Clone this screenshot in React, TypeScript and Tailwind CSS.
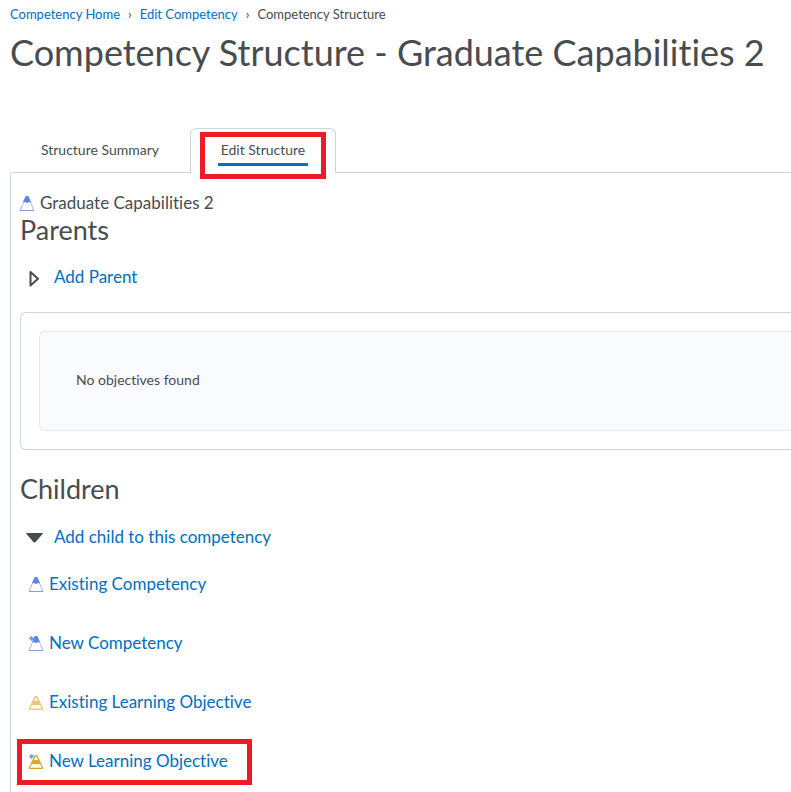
import React, { useState } from 'react';

type IconKind = 'competency' | 'objective';

const childLinks: { label: string; kind: IconKind; isNew: boolean; marked?: boolean }[] = [
  { label: 'Existing Competency', kind: 'competency', isNew: false },
  { label: 'New Competency', kind: 'competency', isNew: true },
  { label: 'Existing Learning Objective', kind: 'objective', isNew: false },
  { label: 'New Learning Objective', kind: 'objective', isNew: true, marked: true },
];

function PyramidIcon({ kind, isNew = false }: { kind: IconKind; isNew?: boolean }) {
  const gold = isNew ? '#dda832' : '#eac67c';
  return (
    <svg viewBox="0 0 16 16" className="w-4 h-4 shrink-0" aria-hidden="true">
      {kind === 'competency' ? (
        <>
          <path d="M5.8 1h2.4L14 14v2H0v-2z" fill="#a9bef2" />
          <path d="M4.2 6.5h5.6l3 7.7v.8H1.2v-.8z" fill="#fff" />
          <path d="M0 15h14v1H0z" fill="#7f9ce6" />
          <path d="M5.8 1h2.4l3 6.6-1.8-.6-2.4 1-2.4-1-1.8.6z" fill="#5f86e0" />
        </>
      ) : (
        <>
          <path d="M5.8 2h2.4L14 14v2H0v-2z" fill={gold} />
          <path d="M6.6 3.4h.8L9 7H5z" fill="#fff6d8" />
          <path d="M2.8 11h8.4l1.6 3.2v.5H1.2v-.5z" fill="#fffaf0" />
        </>
      )}
      {isNew && <path d="M2.5 1v5M0 3.5h5M.8 1.8l3.4 3.4M4.2 1.8L.8 5.2" stroke="#45aef0" strokeWidth=".9" />}
    </svg>
  );
}

function Disclosure({ label, open, onToggle }: { label: string; open: boolean; onToggle: () => void }) {
  return (
    <button onClick={onToggle} aria-expanded={open} className="flex items-center gap-2 pl-1 h-6 text-[17px] text-[#006fbf]">
      <svg viewBox="0 0 22 24" className="w-[22px] h-6" aria-hidden="true">
        {open ? (
          <path d="M2.5 8.5h16L11 17h-1z" fill="#494c4e" stroke="#494c4e" strokeLinejoin="round" />
        ) : (
          <path d="M6.5 7v13.5l7.5-6.8z" fill="none" stroke="#494c4e" strokeWidth="2" strokeLinejoin="round" />
        )}
      </svg>
      {label}
    </button>
  );
}

export default function App() {
  const [parentOpen, setParentOpen] = useState(false);
  const [childOpen, setChildOpen] = useState(true);

  return (
    <div className="min-h-screen flex flex-col pl-[10px] bg-white text-[#494c4e] font-['Lato',sans-serif] [font-variant-ligatures:none] overflow-x-hidden">
      <nav aria-label="Breadcrumb" className="flex items-center gap-2 pt-[5px] h-6 text-[13px]">
        <a href="#home" className="text-[#006fbf]">Competency Home</a>
        <span>›</span>
        <a href="#edit" className="text-[#006fbf]">Edit Competency</a>
        <span>›</span>
        <span>Competency Structure</span>
      </nav>

      <h1 className="mt-2 text-[36px] leading-10 whitespace-nowrap">Competency Structure - Graduate Capabilities 2</h1>

      <div role="tablist" className="flex mt-14 h-[45px] -mb-px relative text-[14px]">
        <button role="tab" aria-selected="false" className="w-[180px] pb-[2px] text-center">Structure Summary</button>
        <button role="tab" aria-selected="true" className="relative w-[146px] flex justify-center bg-white border border-b-0 border-[#cdd5dc] rounded-t-md">
          <span className="mt-[9px] h-7 px-[3px] leading-6 border-b-3 border-[#006fbf]">Edit Structure</span>
          <span className="absolute left-[9px] top-[3px] w-[126px] h-[47px] border-5 border-[#ed1c24]" />
        </button>
      </div>

      <main className="flex-1 border-t border-l border-[#cdd5dc] rounded-tl-xs pl-[9px] pt-[18px]">
        <div className="flex items-center gap-1 h-6 text-[17px]">
          <PyramidIcon kind="competency" />
          <span>Graduate Capabilities 2</span>
        </div>

        <h2 className="text-[27px] leading-[30px]">Parents</h2>
        <div className="mt-5">
          <Disclosure label="Add Parent" open={parentOpen} onToggle={() => setParentOpen(!parentOpen)} />
        </div>

        <div className="mt-[23px] border border-r-0 border-[#cdd5dc] rounded-l-md py-[18px] pl-[18px]">
          <div className="border border-r-0 border-[#e3e9f1] bg-[#f9fbff] rounded-l-md pl-9 pt-9 pb-[38px] text-[14px] leading-6">
            No objectives found
          </div>
        </div>

        <h2 className="mt-6 text-[27px] leading-[30px]">Children</h2>
        <div className="mt-[21px]">
          <Disclosure label="Add child to this competency" open={childOpen} onToggle={() => setChildOpen(!childOpen)} />
        </div>

        {childOpen && (
          <ul className="mt-[23px] pl-[9px] flex flex-col items-start gap-[35px] text-[17px] text-[#006fbf]">
            {childLinks.map(c => (
              <li key={c.label} className="relative h-6">
                <a href="#child" className="flex items-center gap-1 h-6">
                  <PyramidIcon kind={c.kind} isNew={c.isNew} />
                  {c.label}
                </a>
                {c.marked && <span className="absolute -left-3 -right-6 -top-[10px] h-[46px] border-5 border-[#ed1c24] pointer-events-none" />}
              </li>
            ))}
          </ul>
        )}
      </main>
    </div>
  );
}
